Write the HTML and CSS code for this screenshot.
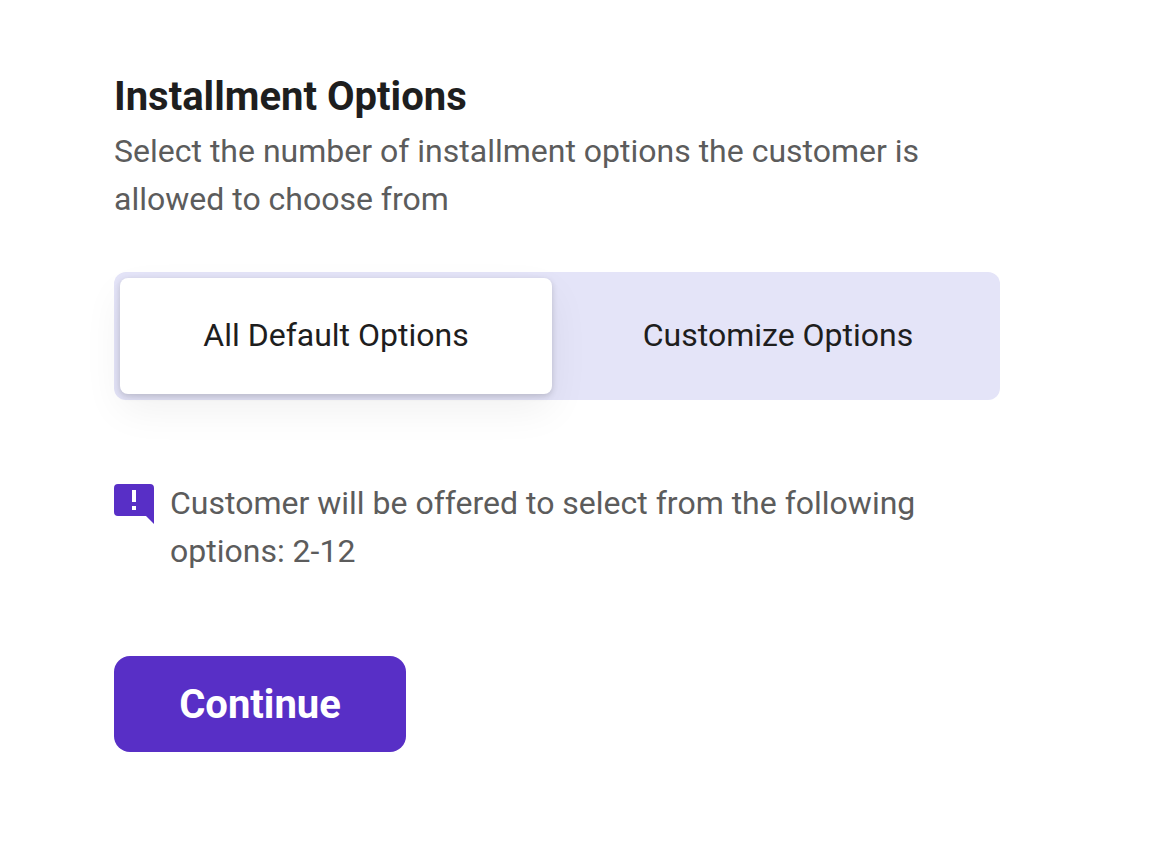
FILE: index.html
```html
<!DOCTYPE html>
<html lang="en">
<head>
  <meta charset="UTF-8">
  <meta name="viewport" content="width=device-width, initial-scale=1.0">
  <title>Installment Options</title>
  <link rel="stylesheet" href="styles.css">
</head>
<body>
  <main class="installments">
    <h1>Installment Options</h1>
    <p class="subtitle">Select the number of installment options the customer is allowed to choose from</p>

    <div class="toggle">
      <button type="button" class="option active" aria-pressed="true">All Default Options</button>
      <button type="button" class="option" aria-pressed="false">Customize Options</button>
    </div>

    <div class="note">
      <svg class="note-icon" width="40" height="40" viewBox="0 0 40 40" aria-hidden="true">
        <path fill="#582fc6" d="M4 0h32a4 4 0 0 1 4 4v36l-8-8H4a4 4 0 0 1-4-4V4a4 4 0 0 1 4-4z"/>
        <path fill="#fff" d="M18 6h4v12h-4zM18 22h4v4h-4z"/>
      </svg>
      <p>Customer will be offered to select from the following options: 2-12</p>
    </div>

    <button type="submit" class="continue">Continue</button>
  </main>
</body>
</html>
```
FILE: styles.css
```css
* {
  box-sizing: border-box;
}
body {
  margin: 0;
  background: #fff;
  font-family: Roboto, "Liberation Sans", sans-serif;
  font-size: 32px;
  line-height: 48px;
  color: #5c5c5c;
}
h1, p {
  margin: 0;
}
.installments {
  max-width: 1000px;
  padding: 67px 0 67px 114px;
}
h1 {
  font-size: 40px;
  line-height: 60px;
  color: #1e1e1e;
}
.toggle {
  display: flex;
  gap: 10px;
  margin-top: 49px;
  padding: 6px;
  border-radius: 12px;
  background: #e4e4f8;
}
button {
  border: none;
  font-family: inherit;
  cursor: pointer;
}
.option {
  flex: 1;
  height: 116px;
  padding: 0 0 2px;
  border-radius: 8px;
  background: transparent;
  font-size: 32px;
  color: #1e1e1e;
}
.option.active {
  background: #fff;
  box-shadow: 0 2px 6px rgba(0, 0, 0, 0.16), 0 16px 40px rgba(0, 0, 0, 0.06);
}
.note {
  display: flex;
  gap: 16px;
  margin-top: 79px;
}
.note-icon {
  flex: none;
  margin-top: 5px;
}
.continue {
  width: 292px;
  height: 96px;
  margin-top: 81px;
  border-radius: 16px;
  background: #582fc6;
  font-size: 40px;
  font-weight: bold;
  color: #fff;
}
```
